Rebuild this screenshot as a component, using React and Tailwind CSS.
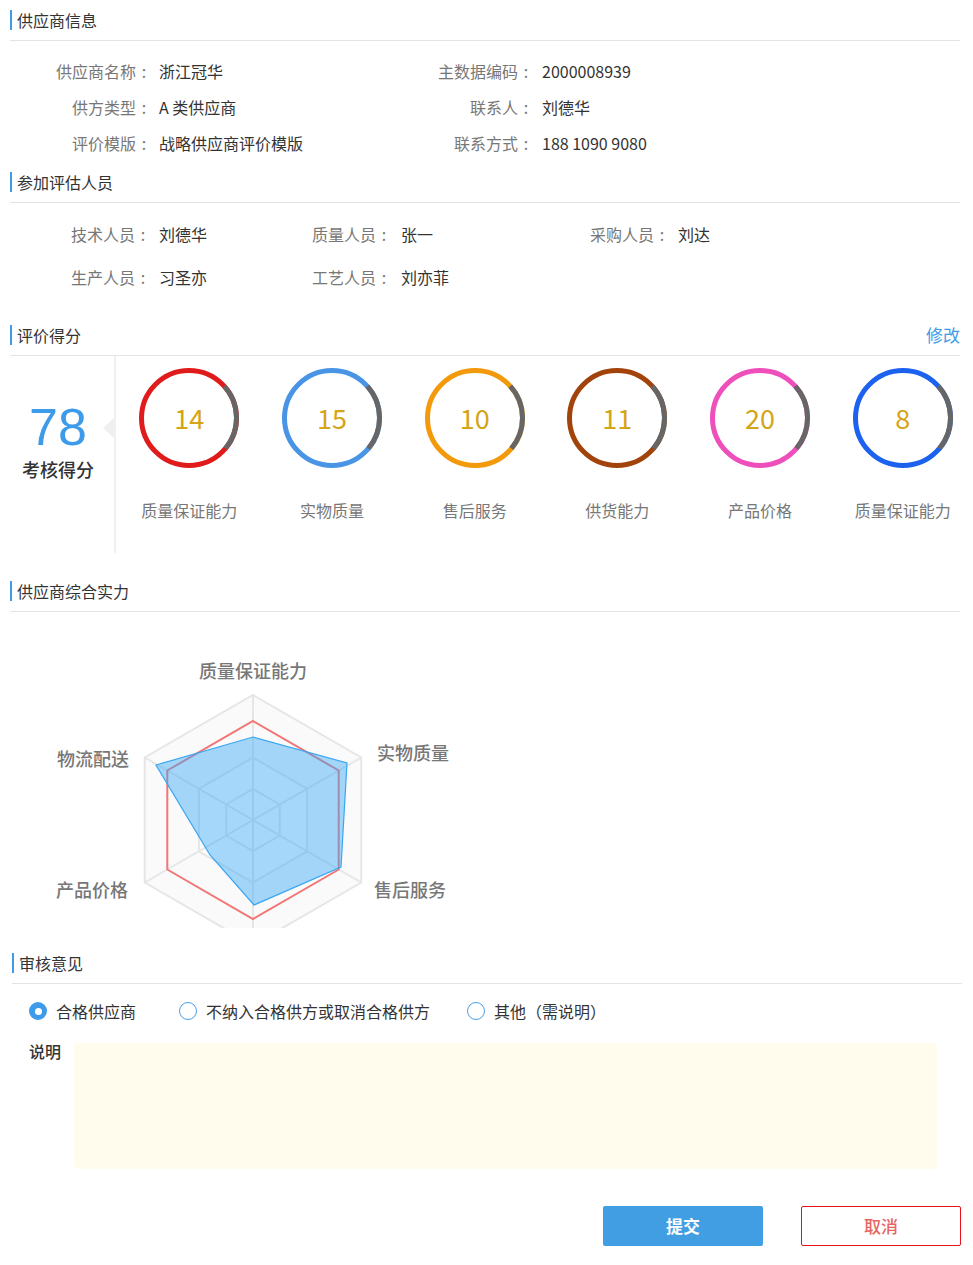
import React from 'react';

const FONT = "font-['Noto_Sans_CJK_SC','Noto_Sans',sans-serif]";

function Header({ title, right }) {
  return (
    <div className="flex items-center justify-between h-[41px] border-b border-[#e3e3e3]">
      <div className="border-l-2 border-[#3d9be9] pl-[5px] text-[16px] leading-[20px] text-[#333]">{title}</div>
      {right}
    </div>
  );
}

// label with the centred colon the reference uses
function Label({ text, className = '' }) {
  return (
    <span className={`text-[#777] ${className}`}>
      {text}
      <span className="inline-block w-[16px] text-center">:</span>
    </span>
  );
}

const scores = [
  { value: 14, label: '质量保证能力', color: '#e01b1b' },
  { value: 15, label: '实物质量', color: '#4a94e6' },
  { value: 10, label: '售后服务', color: '#f39a0c' },
  { value: 11, label: '供货能力', color: '#a2430b' },
  { value: 20, label: '产品价格', color: '#ee4fbb' },
  { value: 8, label: '质量保证能力', color: '#1c62ee' },
];

function Ring({ value, color }) {
  return (
    <div className="relative w-[100px] h-[100px]">
      <svg width="100" height="100" viewBox="0 0 100 100" className="absolute inset-0">
        <circle cx="50" cy="50" r="47.5" fill="none" stroke={color} strokeWidth="5" />
        <path d="M85.3 18.2 A47.5 47.5 0 0 1 86.4 80.5" fill="none" stroke="#666" strokeWidth="5" />
      </svg>
      <div className="absolute inset-0 flex items-center justify-center text-[27px] text-[#d4a514]">{value}</div>
    </div>
  );
}

// hexagon points around the radar centre
const cx = 243;
const cy = 208;
const hex = (r) =>
  [0, 1, 2, 3, 4, 5]
    .map((i) => {
      const a = ((-90 + 60 * i) * Math.PI) / 180;
      return `${(cx + r * Math.cos(a)).toFixed(1)},${(cy + r * Math.sin(a)).toFixed(1)}`;
    })
    .join(' ');

const blue = '243,125 337,151 331,255 244,293 200,243 146,153';

function Radar() {
  const outer = hex(125).split(' ');
  return (
    <svg width="480" height="316" className="block">
      <polygon points={hex(125)} fill="#fafafa" stroke="#e6e6e6" strokeWidth="2" />
      <polygon points={hex(62.5)} fill="#fdfdfd" stroke="#e6e6e6" strokeWidth="2" />
      <polygon points={hex(31)} fill="none" stroke="#e6e6e6" strokeWidth="2" />
      {outer.map((p, i) => {
        const [x, y] = p.split(',');
        return <line key={i} x1={cx} y1={cy} x2={x} y2={y} stroke="#e6e6e6" strokeWidth="2" />;
      })}
      <polygon points={hex(99)} fill="none" stroke="#f27676" strokeWidth="2" />
      <polygon points={blue} fill="rgba(56,168,245,0.45)" stroke="#3aa6f2" strokeWidth="1.2" />
      <g fill="#777" fontSize="18" fontWeight="500" fontFamily="'Noto Sans CJK SC', sans-serif" dominantBaseline="central">
        <text x="243" y="58" textAnchor="middle">质量保证能力</text>
        <text x="367" y="140">实物质量</text>
        <text x="364" y="277">售后服务</text>
        <text x="119" y="146" textAnchor="end">物流配送</text>
        <text x="118" y="277" textAnchor="end">产品价格</text>
      </g>
    </svg>
  );
}

function Radio({ checked, label }) {
  return (
    <div className="flex items-center">
      {checked ? (
        <span className="w-[18px] h-[18px] rounded-full bg-[#3d9be9] flex items-center justify-center">
          <span className="w-[7px] h-[7px] rounded-full bg-white" />
        </span>
      ) : (
        <span className="w-[18px] h-[18px] rounded-full border border-[#4c9fe6] bg-white" />
      )}
      <span className="ml-[9px] text-[16px] text-[#333]">{label}</span>
    </div>
  );
}

export default function App() {
  return (
    <div className={`${FONT} w-[973px] bg-white pl-[10px] pr-[13px] pb-[19px]`}>
      {/* 供应商信息 */}
      <Header title="供应商信息" />
      <div className="pt-[12px] pb-[1px] text-[16px]">
        {[
          ['供应商名称', '浙江冠华', '主数据编码', '2000008939'],
          ['供方类型', 'A 类供应商', '联系人', '刘德华'],
          ['评价模版', '战略供应商评价模版', '联系方式', '188 1090 9080'],
        ].map((row, i) => (
          <div key={i} className="flex h-[36px] items-center">
            <div className="flex w-[383px]">
              <Label text={row[0]} className="w-[142px] text-right" />
              <span className="ml-[7px] text-[#333]">{row[1]}</span>
            </div>
            <div className="flex">
              <Label text={row[2]} className="w-[141px] text-right" />
              <span className="ml-[8px] text-[#333]">{row[3]}</span>
            </div>
          </div>
        ))}
      </div>

      {/* 参加评估人员 */}
      <Header title="参加评估人员" />
      <div className="pt-[9px] pb-[17px] text-[16px]">
        <div className="flex h-[43px] items-center">
          <div className="flex w-[302px]">
            <Label text="技术人员" className="w-[141px] text-right" />
            <span className="ml-[8px] text-[#333]">刘德华</span>
          </div>
          <div className="flex w-[278px]">
            <Label text="质量人员" />
            <span className="ml-[9px] text-[#333]">张一</span>
          </div>
          <div className="flex">
            <Label text="采购人员" />
            <span className="ml-[8px] text-[#333]">刘达</span>
          </div>
        </div>
        <div className="flex h-[43px] items-center">
          <div className="flex w-[302px]">
            <Label text="生产人员" className="w-[141px] text-right" />
            <span className="ml-[8px] text-[#333]">习圣亦</span>
          </div>
          <div className="flex w-[278px]">
            <Label text="工艺人员" />
            <span className="ml-[9px] text-[#333]">刘亦菲</span>
          </div>
        </div>
      </div>

      {/* 评价得分 */}
      <Header title="评价得分" right={<span className="text-[17px] text-[#3d9be9]">修改</span>} />
      <div className="flex h-[197px]">
        <div className="relative w-[106px] shrink-0 border-r-2 border-[#f0f0f0] pr-[8px] flex flex-col items-center">
          <div className="mt-[45px] font-['Liberation_Sans',sans-serif] text-[52px] leading-[52px] text-[#3d9be9]">78</div>
          <div className="mt-[4px] text-[18px] leading-[24px] font-medium text-[#333]">考核得分</div>
          <span className="absolute right-0 top-[62px] w-0 h-0 border-y-[10px] border-y-transparent border-r-[11px] border-r-[#efefef]" />
        </div>
        <div className="ml-[2px] grid grid-cols-6 w-[856px] shrink-0">
          {scores.map((s, i) => (
            <div key={i} className="flex flex-col items-center pt-[12px]">
              <Ring value={s.value} color={s.color} />
              <div className="mt-[31px] text-[16px] leading-[22px] text-[#777]">{s.label}</div>
            </div>
          ))}
        </div>
      </div>

      {/* 供应商综合实力 */}
      <div className="mt-[18px]">
        <Header title="供应商综合实力" />
        <div className="h-[316px] overflow-hidden">
          <Radar />
        </div>
      </div>

      {/* 审核意见 */}
      <div className="mt-[15px] ml-[2px] -mr-[2px]">
        <Header title="审核意见" />
        <div className="mt-[7px] h-[40px] flex items-center pl-[17px]">
          <Radio checked label="合格供应商" />
          <div className="ml-[43px]">
            <Radio label="不纳入合格供方或取消合格供方" />
          </div>
          <div className="ml-[37px]">
            <Radio label="其他（需说明）" />
          </div>
        </div>
        <div className="mt-[12px] flex">
          <div className="w-[62px] pl-[17px] text-[16px] leading-[16px] font-medium text-[#333]">说明</div>
          <div className="w-[863px] h-[126px] rounded-[4px] bg-[#fffcee]" />
        </div>
        <div className="mt-[37px] flex justify-end gap-[38px] pr-[1px]">
          <button className="w-[160px] h-[40px] rounded-[2px] bg-[#419ee3] text-white text-[17px] font-bold">提交</button>
          <button className="w-[160px] h-[40px] rounded-[2px] border border-[#e8101a] text-[#e86464] text-[17px] font-medium">取消</button>
        </div>
      </div>
    </div>
  );
}
